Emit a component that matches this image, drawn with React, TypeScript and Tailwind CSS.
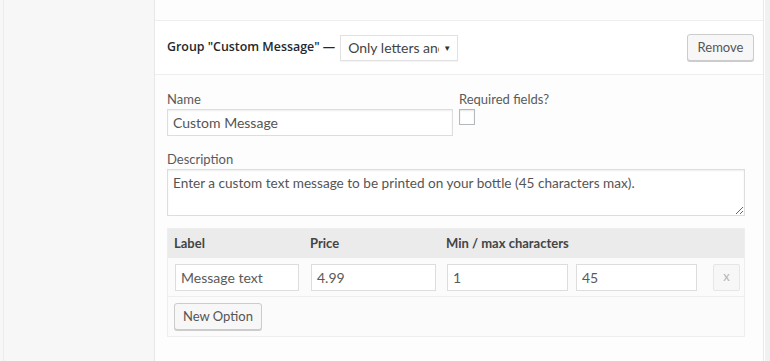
import React from "react";

const font = { fontFamily: '"Lato", "Open Sans", sans-serif' };
const headFont = { fontFamily: '"Open Sans", "Lato", sans-serif' };

export default function App() {
  return (
    <div
      className="flex h-[361px] w-[770px] overflow-hidden bg-[#f7f7f7] text-[13px] text-[#5a5a5a]"
      style={font}
    >
      <div className="h-full w-[154px] shrink-0 pl-[3px]">
        <div className="h-full border-l border-[#ececec]" />
      </div>
      <div className="flex h-full w-[610px] shrink-0 flex-col border-x border-[#e8e8e8] bg-[#fdfdfd]">
        <div className="h-[21px] shrink-0 border-b border-[#eeeeee]" />
        <div className="flex h-[54px] shrink-0 items-center border-b border-[#eeeeee] bg-white pl-[12px] pr-[9px]">
          <span className="text-[12.4px] font-semibold text-[#23282d]" style={headFont}>
            Group "Custom Message" —
          </span>
          <div className="ml-[5px] flex h-[26px] w-[118px] items-center border border-[#e1e1e1] bg-white pl-[7px] pr-[6px] text-[14px] text-[#444] shadow-[0_1px_1px_rgba(0,0,0,0.04)]">
            <span className="min-w-0 flex-1 overflow-hidden whitespace-nowrap [text-overflow:clip]">Only letters and numbers</span>
            <span className="ml-[4px] shrink-0 text-[8px] text-[#333]">▼</span>
          </div>
          <div className="flex-1" />
          <button className="h-[27px] w-[67px] rounded-[3px] border border-[#cccccc] bg-[#f7f7f7] text-[13px] text-[#555] shadow-[0_1px_0_#cccccc]">
            Remove
          </button>
        </div>
        <div className="flex flex-col pl-[12px] pr-[18px] pt-[16px]">
          <div className="flex">
            <div className="flex w-[286px] flex-col">
              <label className="h-[17px] leading-[17px]">Name</label>
              <div className="mt-[1px] flex h-[27px] items-center border border-[#dddddd] bg-white px-[5px] text-[14px] text-[#555] shadow-[inset_0_1px_2px_rgba(0,0,0,0.07)]">
                Custom Message
              </div>
            </div>
            <div className="ml-[6px] flex flex-col">
              <label className="h-[17px] leading-[17px]">Required fields?</label>
              <div className="mt-[1px] h-[16px] w-[16px] border border-[#b4b9be] bg-white shadow-[inset_0_1px_2px_rgba(0,0,0,0.1)]" />
            </div>
          </div>
          <label className="mt-[15px] h-[17px] leading-[17px]">Description</label>
          <textarea
            className="mt-[1px] h-[47px] w-[578px] resize-y border border-[#dddddd] bg-white px-[5px] py-[3px] text-[13.6px] leading-[20px] text-[#555] shadow-[inset_0_1px_2px_rgba(0,0,0,0.07)] outline-none"
            style={font}
            readOnly
            defaultValue="Enter a custom text message to be printed on your bottle (45 characters max)."
          />
          <div className="mt-[12px] w-[578px] border border-[#eeeeee] bg-[#fbfbfb]">
            <div className="grid h-[29px] grid-cols-[136px_136px_129px_137px_1fr] items-center bg-[#ebebeb] font-bold text-[#444]">
              <div className="pl-[6px]">Label</div>
              <div className="pl-[6px]">Price</div>
              <div className="col-span-3 pl-[6px]">Min / max characters</div>
            </div>
            <div className="grid h-[39px] grid-cols-[136px_136px_129px_137px_1fr] items-center border-b border-[#eeeeee]">
              <div className="pl-[7px]">
                <div className="flex h-[27px] w-[124px] items-center border border-[#dddddd] bg-white px-[5px] text-[14px]">Message text</div>
              </div>
              <div className="pl-[7px]">
                <div className="flex h-[27px] w-[125px] items-center border border-[#dddddd] bg-white px-[5px] text-[14px]">4.99</div>
              </div>
              <div className="pl-[7px]">
                <div className="flex h-[27px] w-[121px] items-center border border-[#dddddd] bg-white px-[5px] text-[14px]">1</div>
              </div>
              <div className="pl-[7px]">
                <div className="flex h-[27px] w-[121px] items-center border border-[#dddddd] bg-white px-[5px] text-[14px]">45</div>
              </div>
              <div className="pl-[7px]">
                <div className="flex h-[27px] w-[27px] items-center justify-center rounded-[2px] border border-[#e6e6e6] bg-[#f7f7f7] text-[13px] text-[#b5b5b5]">x</div>
              </div>
            </div>
            <div className="flex h-[39px] items-center pl-[6px]">
              <button className="h-[27px] w-[88px] rounded-[3px] border border-[#cccccc] bg-[#f7f7f7] text-[13px] text-[#555] shadow-[0_1px_0_#cccccc]">
                New Option
              </button>
            </div>
          </div>
        </div>
      </div>
      <div className="h-full flex-1 border-l border-[#ffffff] bg-[#f1f1f1]" />
    </div>
  );
}
